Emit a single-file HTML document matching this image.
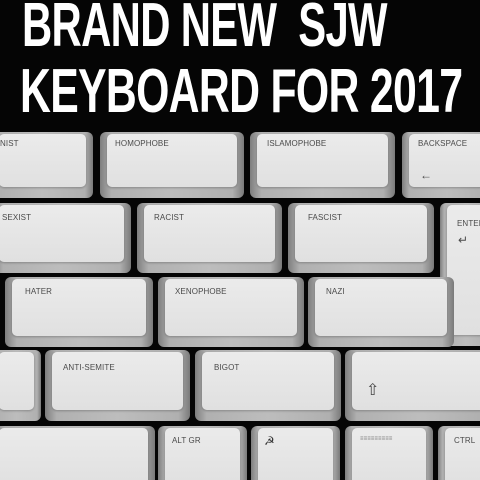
<!DOCTYPE html>
<html><head><meta charset="utf-8"><style>
*{margin:0;padding:0;box-sizing:border-box}
html,body{width:480px;height:480px;overflow:hidden}
body{background:#050505;position:relative;font-family:"Liberation Sans",sans-serif}
.t{position:absolute;color:#fff;font-weight:bold;font-size:62px;line-height:1;white-space:pre;transform-origin:left top;letter-spacing:-1px}
.k{position:absolute;border-radius:6px;background:linear-gradient(90deg,#7e7e7e,#b0b0b0 8%,#bdbdbd 50%,#b0b0b0 92%,#7a7a7a);}
.k::after{content:"";position:absolute;left:7px;right:7px;top:2px;bottom:11px;border-radius:5px;background:linear-gradient(180deg,#ebebeb,#e0e0e0);box-shadow:0 1px 2px rgba(0,0,0,.25)}
.l{position:absolute;z-index:2;font-size:8px;color:#4a4a4a;letter-spacing:0.1px}
</style></head><body>
<div class="t" style="left:22px;top:-5px;transform:scaleX(0.675)">BRAND NEW  SJW</div>
<div class="t" style="left:20px;top:61px;transform:scaleX(0.69)">KEYBOARD FOR 2017</div>

<!-- row1 -->
<div class="k" style="left:-8px;top:132px;width:101px;height:66px"><span class="l" style="left:8px;top:7px">NIST</span></div>
<div class="k" style="left:100px;top:132px;width:144px;height:66px"><span class="l" style="left:15px;top:7px">HOMOPHOBE</span></div>
<div class="k" style="left:250px;top:132px;width:145px;height:66px"><span class="l" style="left:17px;top:7px">ISLAMOPHOBE</span></div>
<div class="k" style="left:402px;top:132px;width:90px;height:66px"><span class="l" style="left:16px;top:7px">BACKSPACE</span><span class="l" style="left:18px;top:36px;font-size:12px">&larr;</span></div>
<!-- row2 -->
<div class="k" style="left:-8px;top:203px;width:139px;height:70px"><span class="l" style="left:10px;top:10px">SEXIST</span></div>
<div class="k" style="left:137px;top:203px;width:145px;height:70px"><span class="l" style="left:17px;top:10px">RACIST</span></div>
<div class="k" style="left:288px;top:203px;width:146px;height:70px"><span class="l" style="left:20px;top:10px">FASCIST</span></div>
<div class="k" style="left:440px;top:203px;width:52px;height:143px"><span class="l" style="left:17px;top:16px">ENTER</span><span class="l" style="left:18px;top:30px;font-size:12px">&#8629;</span></div>
<!-- row3 -->
<div class="k" style="left:5px;top:277px;width:148px;height:70px"><span class="l" style="left:20px;top:10px">HATER</span></div>
<div class="k" style="left:158px;top:277px;width:146px;height:70px"><span class="l" style="left:17px;top:10px">XENOPHOBE</span></div>
<div class="k" style="left:308px;top:277px;width:146px;height:70px"><span class="l" style="left:18px;top:10px">NAZI</span></div>
<!-- row4 -->
<div class="k" style="left:-8px;top:350px;width:49px;height:71px"></div>
<div class="k" style="left:45px;top:350px;width:145px;height:71px"><span class="l" style="left:18px;top:13px">ANTI-SEMITE</span></div>
<div class="k" style="left:195px;top:350px;width:146px;height:71px"><span class="l" style="left:19px;top:13px">BIGOT</span></div>
<div class="k" style="left:345px;top:350px;width:147px;height:71px"><span class="l" style="left:21px;top:30px;font-size:16px;color:#444">&#8679;</span></div>
<!-- row5 -->
<div class="k" style="left:-8px;top:426px;width:163px;height:70px"></div>
<div class="k" style="left:158px;top:426px;width:89px;height:70px"><span class="l" style="left:14px;top:10px">ALT GR</span></div>
<div class="k" style="left:251px;top:426px;width:89px;height:70px"><span class="l" style="left:13px;top:8px;font-size:12px;color:#333">&#9773;</span></div>
<div class="k" style="left:345px;top:426px;width:88px;height:70px"><span class="l" style="left:15px;top:10px;font-size:6px;color:#777">&#8801;&#8801;&#8801;&#8801;&#8801;&#8801;&#8801;&#8801;&#8801;</span></div>
<div class="k" style="left:438px;top:426px;width:54px;height:70px"><span class="l" style="left:16px;top:10px">CTRL</span></div>
</body></html>
